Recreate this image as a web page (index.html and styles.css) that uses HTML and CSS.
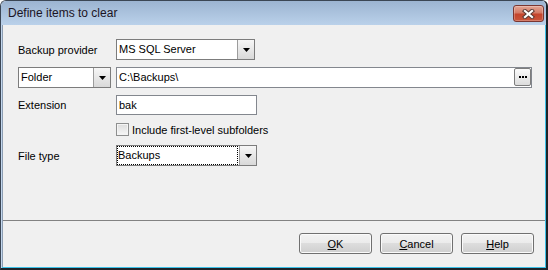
FILE: index.html
```html
<!DOCTYPE html>
<html lang="en">
<head>
    <meta charset="UTF-8">
    <title>Define items to clear</title>
    <link rel="stylesheet" href="styles.css">
</head>
<body>
<div class="window">
    <div class="titlebar">
        <span class="caption">Define items to clear</span>
        <button class="close-btn" type="button" aria-label="Close">
            <svg width="13" height="10" viewBox="0 0 13 10">
                <path d="M3 2 L10 8 M10 2 L3 8" stroke="#5b3a34" stroke-width="4.2" stroke-linecap="square"/>
                <path d="M3 2 L10 8 M10 2 L3 8" stroke="#ffffff" stroke-width="2.2" stroke-linecap="square"/>
            </svg>
        </button>
    </div>
    <div class="frame">
        <div class="client">
            <div class="form">
                <div class="row">
                    <span class="label">Backup provider</span>
                    <div class="combo provider">
                        <span class="value">MS SQL Server</span>
                        <span class="drop"><svg width="7" height="4" viewBox="0 0 7 4"><polygon points="0,0 7,0 3.5,4" fill="#000"/></svg></span>
                    </div>
                </div>
                <div class="row">
                    <div class="combo folder">
                        <span class="value">Folder</span>
                        <span class="drop"><svg width="7" height="4" viewBox="0 0 7 4"><polygon points="0,0 7,0 3.5,4" fill="#000"/></svg></span>
                    </div>
                    <div class="edit path">
                        <span class="value">C:\Backups\</span>
                        <button class="ellipsis" type="button"><i></i><i></i><i></i></button>
                    </div>
                </div>
                <div class="row short">
                    <span class="label">Extension</span>
                    <div class="edit ext"><span class="value">bak</span></div>
                </div>
                <div class="row check-row">
                    <span class="checkbox"></span>
                    <span class="check-label">Include first-level subfolders</span>
                </div>
                <div class="row">
                    <span class="label">File type</span>
                    <div class="combo filetype">
                        <span class="value focused">Backups</span>
                        <span class="drop"><svg width="7" height="4" viewBox="0 0 7 4"><polygon points="0,0 7,0 3.5,4" fill="#000"/></svg></span>
                    </div>
                </div>
            </div>
            <div class="sep"></div>
            <div class="footer">
                <button class="btn" type="button"><u>O</u>K</button>
                <button class="btn" type="button"><u>C</u>ancel</button>
                <button class="btn" type="button"><u>H</u>elp</button>
            </div>
        </div>
    </div>
</div>
</body>
</html>
```

FILE: styles.css
```css
body {
    margin: 0;
    font-family: "Liberation Sans", Arial, sans-serif;
    font-size: 11px;
    color: #000;
}
.window {
    width: 548px;
    height: 270px;
    box-sizing: border-box;
    display: flex;
    flex-direction: column;
    border: 1px solid #3b4654;
    border-right: 2px solid #1f2328;
    border-bottom: 2px solid #1f2328;
    border-radius: 6px 6px 0 0;
    overflow: hidden;
}
.titlebar {
    flex: none;
    height: 24px;
    box-sizing: border-box;
    display: flex;
    justify-content: space-between;
    align-items: flex-start;
    padding: 4px 2px 0 7px;
    background: linear-gradient(#9cb4d1, #bad1ea);
}
.caption {
    margin-top: 1px;
    font-size: 12px;
    line-height: 14px;
    color: #1b1424;
}
.close-btn {
    width: 31px;
    height: 17px;
    padding: 0;
    border: 1px solid #7a3631;
    border-radius: 3px;
    background: linear-gradient(#e3a594 0%, #d47a66 45%, #c4442c 55%, #c9553b 100%);
    box-shadow: inset 0 0 0 1px rgba(255,255,255,0.25);
    display: flex;
    align-items: center;
    justify-content: center;
}
.frame {
    flex: 1;
    display: flex;
    border-left: 1px solid #c3d7ee;
    padding: 0 1px 1px 0;
    background: #3cc1e8;
}
.client {
    flex: 1;
    display: flex;
    flex-direction: column;
    border-left: 1px solid #8c9db2;
    background: #f0f0f0;
}
.form {
    flex: 1;
    padding: 14px 0 0 15px;
}
.row {
    display: flex;
    align-items: center;
    height: 21px;
    margin-bottom: 7px;
}
.row.short {
    height: 20px;
}
.label {
    width: 98px;
}
.combo, .edit {
    display: flex;
    box-sizing: border-box;
    height: 21px;
    border: 1px solid #7c7c7c;
    background: #fff;
}
.edit {
    border-color: #83878e;
}
.value {
    flex: 1;
    padding-left: 2px;
    line-height: 19px;
    white-space: nowrap;
}
.drop {
    width: 16px;
    border-left: 1px solid #9c9c9c;
    background: linear-gradient(#f6f6f6, #d9d9d9);
    display: flex;
    align-items: center;
    justify-content: center;
}
.provider {
    width: 139px;
}
.folder {
    width: 93px;
    margin-right: 5px;
}
.path {
    width: 416px;
}
.ext {
    width: 141px;
    height: 20px;
}
.ext .value {
    line-height: 18px;
}
.filetype {
    width: 141px;
}
.focused {
    padding-left: 1px;
    outline: 1px dotted #000;
    outline-offset: -1px;
    margin-right: 1px;
}
.ellipsis {
    width: 17px;
    height: 18px;
    margin: 0;
    padding: 0;
    border: 1px solid #7d7d7d;
    border-radius: 2px;
    background: linear-gradient(#fbfbfb, #dcdcdc);
    display: flex;
    align-items: center;
    justify-content: center;
    gap: 1px;
}
.ellipsis i {
    width: 2px;
    height: 2px;
    background: #000;
}
.check-row {
    height: 15px;
    margin-bottom: 8px;
    padding-left: 98px;
}
.checkbox {
    width: 13px;
    height: 13px;
    box-sizing: border-box;
    border: 1px solid #8e8f8f;
    background: linear-gradient(#dcdcdc, #f7f7f7);
    box-shadow: inset 0 0 0 1px #f4f4f4;
}
.check-label {
    margin-left: 3px;
}
.sep {
    height: 1px;
    background: #828282;
}
.footer {
    display: flex;
    justify-content: flex-end;
    gap: 8px;
    padding: 12px 11px 13px;
}
.btn {
    width: 73px;
    height: 21px;
    padding: 0;
    font: inherit;
    color: #000;
    border: 1px solid #707070;
    border-radius: 3px;
    background: linear-gradient(#f2f2f2 0%, #ebebeb 50%, #dddddd 50%, #cfcfcf 100%);
    box-shadow: inset 0 0 0 1px #fafafa;
}
```
